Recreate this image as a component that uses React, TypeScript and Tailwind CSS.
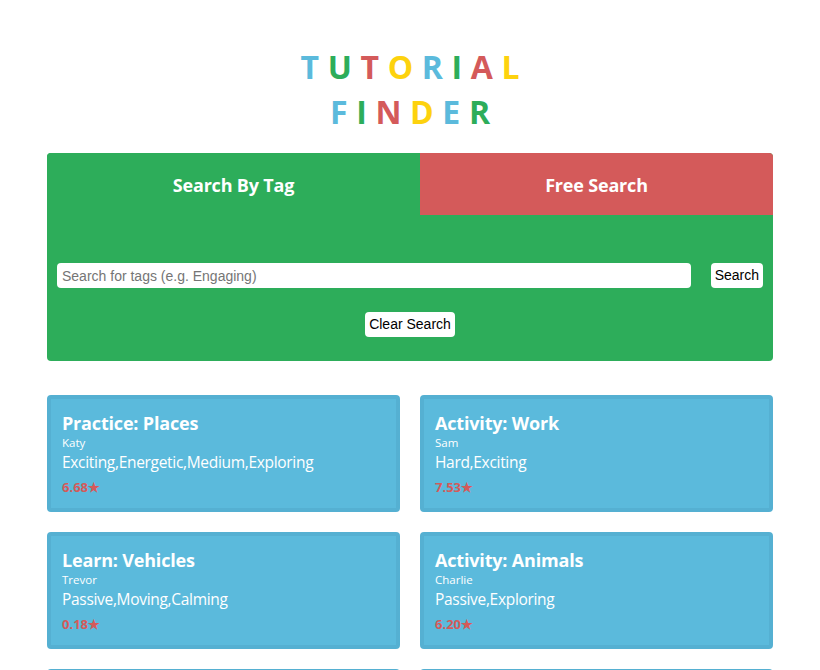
import React from 'react'

interface Tutorial {
  title: string
  author: string
  tags: string[]
  rating: string
}

const TUTORIALS: Tutorial[] = [
  { title: 'Practice: Places', author: 'Katy', tags: ['Exciting', 'Energetic', 'Medium', 'Exploring'], rating: '6.68' },
  { title: 'Activity: Work', author: 'Sam', tags: ['Hard', 'Exciting'], rating: '7.53' },
  { title: 'Learn: Vehicles', author: 'Trevor', tags: ['Passive', 'Moving', 'Calming'], rating: '0.18' },
  { title: 'Activity: Animals', author: 'Charlie', tags: ['Passive', 'Exploring'], rating: '6.20' },
  { title: 'Practice: Colours', author: 'Katy', tags: ['Calming'], rating: '5.00' },
  { title: 'Learn: Shapes', author: 'Sam', tags: ['Easy'], rating: '4.10' },
]

const LETTER_COLORS = ['text-[#5bbadc]', 'text-[#2dad5a]', 'text-[#d45a5a]', 'text-[#fdd20e]']

function ColorWord({ word }: { word: string }) {
  return (
    <div className="pl-[0.27em] tracking-[0.27em]">
      {word.split('').map((ch, i) => (
        <span key={i} className={LETTER_COLORS[i % 4]}>{ch}</span>
      ))}
    </div>
  )
}

function TutorialCard({ t }: { t: Tutorial }) {
  return (
    <div className="rounded border-4 border-[#55b0d2] bg-[#5bbadc] px-[11px] pt-[12px] pb-[12px] text-white">
      <h3 className="text-[18px] font-bold leading-[24px] tracking-[-0.01em]">{t.title}</h3>
      <div className="text-[11.5px] leading-[16px]">{t.author}</div>
      <div className="text-[15.5px] leading-[22px] tracking-[-0.02em]">{t.tags.join(',')}</div>
      <div className="mt-[5px] text-[13px] font-bold leading-[18px] text-[#d45a5a]">{t.rating}★</div>
    </div>
  )
}

export default function App() {
  return (
    <div className="min-h-screen bg-white font-['Open_Sans',sans-serif]">
      <div className="mx-auto w-[726px] pt-[44px]">
        <div className="text-center text-[32px] font-bold leading-[45px]">
          <ColorWord word="TUTORIAL" />
          <ColorWord word="FINDER" />
        </div>

        <div className="mt-[19px] overflow-hidden rounded bg-[#2dad5a]">
          <div className="flex h-[62px] text-[18px] font-bold tracking-[-0.01em] text-white">
            <button className="flex w-[373px] items-center justify-center bg-[#2dad5a] pt-[2px]">Search By Tag</button>
            <button className="flex flex-1 items-center justify-center bg-[#d45a5a] pt-[2px]">Free Search</button>
          </div>
          <div className="px-[10px] pt-[48px] pb-[24px] font-['Liberation_Sans',Arial,sans-serif] text-[14px]">
            <div className="flex items-center">
              <input
                className="h-[25px] w-[634px] rounded bg-white px-[5px] text-[14px] text-black outline-none placeholder:text-[#757575]"
                placeholder="Search for tags (e.g. Engaging)"
              />
              <button className="ml-auto h-[25px] rounded bg-white px-[4px] text-black">Search</button>
            </div>
            <div className="mt-[24px] flex justify-center">
              <button className="h-[25px] rounded bg-white px-[4px] text-black">Clear Search</button>
            </div>
          </div>
        </div>

        <div className="mt-[34px] grid grid-cols-2 gap-x-[20px] gap-y-[20px] pb-[20px]">
          {TUTORIALS.map((t, i) => (
            <TutorialCard key={i} t={t} />
          ))}
        </div>
      </div>
    </div>
  )
}
